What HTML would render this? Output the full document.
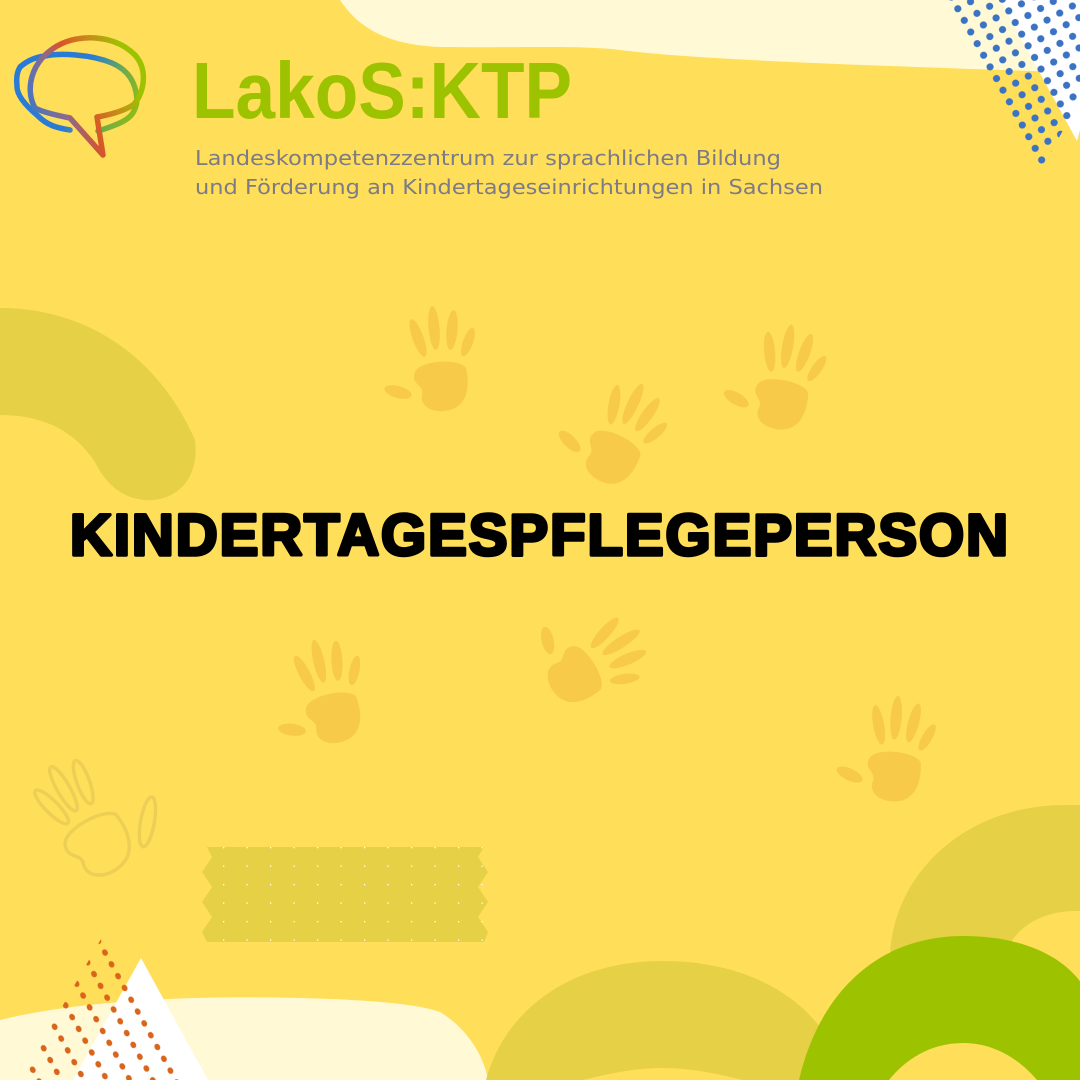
<!DOCTYPE html>
<html><head><meta charset="utf-8"><style>
html,body{margin:0;padding:0;background:#FFDE59;}
svg{display:block}
</style></head><body>
<svg width="1080" height="1080" viewBox="0 0 1080 1080" xmlns="http://www.w3.org/2000/svg">
<defs>
<linearGradient id="lg" gradientUnits="userSpaceOnUse" x1="15" y1="100" x2="145" y2="50">
<stop offset="0" stop-color="#2a7bd6"/>
<stop offset="0.3" stop-color="#8a6a90"/>
<stop offset="0.45" stop-color="#d9532a"/>
<stop offset="0.65" stop-color="#c98a1a"/>
<stop offset="0.85" stop-color="#9dc200"/>
</linearGradient>
<linearGradient id="lg2" gradientUnits="userSpaceOnUse" x1="20" y1="80" x2="140" y2="130">
<stop offset="0" stop-color="#2a7bd6"/>
<stop offset="0.45" stop-color="#2a7bd6"/>
<stop offset="0.7" stop-color="#6aaa50"/>
<stop offset="1" stop-color="#9dc200"/>
</linearGradient>
<pattern id="bd" width="14.5" height="13.3" patternUnits="userSpaceOnUse" patternTransform="rotate(-29)">
<circle cx="7" cy="6.5" r="3.6" fill="#3a72c4"/>
</pattern>
<pattern id="od" width="20" height="13.5" patternUnits="userSpaceOnUse" patternTransform="rotate(-29)">
<ellipse cx="10" cy="6.5" rx="2.8" ry="3.4" fill="#d9641c"/>
</pattern>
<pattern id="wd" width="23.5" height="18.5" patternUnits="userSpaceOnUse" x="212" y="847">
<rect x="11" y="0" width="1.3" height="1.3" fill="#fff"/>
</pattern>
<clipPath id="ct"><polygon points="945,0 1080,0 1080,100 1042,168"/></clipPath>
<clipPath id="cb"><polygon points="105,932 190,1080 20,1080"/></clipPath>
<g id="hand" fill="#F7CA4A">
<path d="M-25,-8 C-20,-20 20,-22 26,-12 C30,5 28,25 10,30 C-5,34 -20,28 -18,15 C-15,5 -30,5 -25,-8 Z"/>
<ellipse cx="-22" cy="-42" rx="5.5" ry="20" transform="rotate(-20 -22 -42)"/>
<ellipse cx="-6" cy="-52" rx="5.5" ry="22" transform="rotate(-5 -6 -52)"/>
<ellipse cx="12" cy="-50" rx="5.5" ry="20" transform="rotate(5 12 -50)"/>
<ellipse cx="28" cy="-38" rx="5" ry="15" transform="rotate(20 28 -38)"/>
<ellipse cx="-42" cy="12" rx="14" ry="6" transform="rotate(15 -42 12)"/>
</g>
</defs>

<path d="M340,0 C360,30 390,45 440,47 C520,48 580,45 620,50 C700,60 860,65 1060,72 L1080,72 L1080,0 Z" fill="#FFF9D6"/>
<polygon points="1000,0 1080,0 1080,130 1077,141" fill="#ffffff"/>
<rect x="940" y="0" width="140" height="170" fill="url(#bd)" clip-path="url(#ct)"/>

<!-- logo -->
<g fill="none" stroke-width="5.5" stroke-linejoin="round" stroke-linecap="round">
<path d="M20,67 C28,60 36,57 45,56 C60,53 90,54 112,63 C128,70 136,82 137,100 C136,112 130,118 122,122 C112,127 104,129 98,131 M70,130 C58,128 48,126 38,116 C26,106 16,95 17,85 C16,77 17,72 20,67" stroke="url(#lg2)"/>
<path d="M35,108 C25,90 30,62 57,46 C80,33 115,35 135,55 C150,72 142,97 133,105 C122,112 108,115 97,117 L103,155 L70,118 C55,115 42,112 35,108 Z" stroke="url(#lg)"/>
</g>
<text x="192" y="118" font-family="Liberation Sans, sans-serif" font-weight="bold" font-size="80" fill="#9DC200" textLength="380" lengthAdjust="spacingAndGlyphs">LakoS:KTP</text>
<text x="195" y="165" font-family="DejaVu Sans, sans-serif" font-size="20" fill="#7d7b86" textLength="586" lengthAdjust="spacingAndGlyphs">Landeskompetenzzentrum zur sprachlichen Bildung</text>
<text x="195" y="194" font-family="DejaVu Sans, sans-serif" font-size="20" fill="#7d7b86" textLength="628" lengthAdjust="spacingAndGlyphs">und Förderung an Kindertageseinrichtungen in Sachsen</text>

<path d="M0,308 C90,308 160,360 195,440 C200,480 175,502 145,500 C120,498 105,482 95,462 C75,432 45,415 0,415 Z" fill="#E6D046"/>

<use href="#hand" transform="translate(440,380)"/>
<use href="#hand" transform="translate(612,452) rotate(30)"/>
<use href="#hand" transform="translate(780,398) rotate(15)"/>
<use href="#hand" transform="translate(332,712) rotate(-8)"/>
<use href="#hand" transform="translate(578,672) rotate(62)"/>
<use href="#hand" transform="translate(893,770) rotate(10)"/>
<g transform="translate(95,840) rotate(-25) scale(1.15)" fill="none" stroke="#EDCF55" stroke-width="3">
<path d="M-25,-8 C-20,-20 20,-22 26,-12 C30,5 28,25 10,30 C-5,34 -20,28 -18,15 C-15,5 -30,5 -25,-8 Z"/>
<ellipse cx="-22" cy="-42" rx="5.5" ry="20" transform="rotate(-20 -22 -42)"/>
<ellipse cx="-6" cy="-52" rx="5.5" ry="22" transform="rotate(-5 -6 -52)"/>
<ellipse cx="12" cy="-50" rx="5.5" ry="20" transform="rotate(5 12 -50)"/>
<ellipse cx="48" cy="5" rx="6" ry="22" transform="rotate(35 48 5)"/>
</g>

<text x="70" y="555" font-family="Liberation Sans, sans-serif" font-weight="bold" font-size="58" fill="#000" stroke="#000" stroke-width="3.5" stroke-linejoin="round" textLength="938" lengthAdjust="spacing">KINDERTAGESPFLEGEPERSON</text>

<path d="M207,847 L484,847 L478,857 L488,872 L478,887 L488,902 L478,917 L488,932 L484,942 L207,942 L202,932 L212,917 L202,902 L212,887 L202,872 L212,857 Z" fill="#E6D046"/>
<rect x="202" y="847" width="286" height="95" fill="url(#wd)"/>

<path d="M890,960 C890,880 960,805 1065,805 L1080,805 L1080,1080 L890,1080 Z M1005,955 C1015,925 1045,911 1075,911 L1080,911 L1080,1080 L1005,1080 Z" fill="#E6D046" fill-rule="evenodd"/>

<path d="M0,1020 C80,1000 200,995 300,998 C380,1000 420,1005 440,1012 C470,1030 485,1060 488,1080 L0,1080 Z" fill="#FFF9D6"/>
<polygon points="141,958 208,1080 73,1080" fill="#ffffff"/>
<rect x="0" y="930" width="200" height="150" fill="url(#od)" clip-path="url(#cb)"/>

<path d="M486,1080 C505,1010 570,961 663,961 C760,961 830,1010 844,1080 Z" fill="#E6D046"/>
<path d="M583,1080 C600,1076 630,1068 663,1068 C696,1068 726,1076 743,1080 Z" fill="#FFDE59"/>
<path d="M799,1080 C820,990 880,936 963,936 C1040,936 1080,970 1090,1000 L1090,1080 Z" fill="#9DC200"/>
<path d="M889,1080 C905,1060 930,1043 963,1043 C995,1043 1020,1060 1037,1080 Z" fill="#FFDE59"/>
</svg>
</body></html>
